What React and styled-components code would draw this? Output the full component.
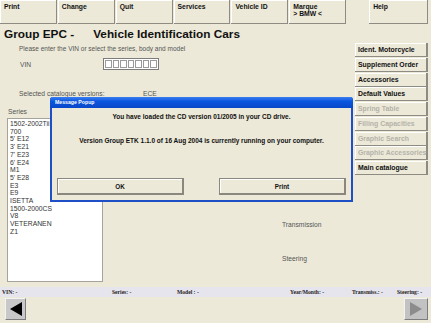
import React from "react";
import styled, { createGlobalStyle } from "styled-components";

const GlobalStyle = createGlobalStyle`
	html, body {
		margin: 0;
		padding: 0;
		background: #ece9d8;
	}
	* {
		box-sizing: border-box;
	}
`;

const Screen = styled.div`
	position: relative;
	width: 431px;
	height: 323px;
	overflow: hidden;
	background: #ece9d8;
	font-family: "Liberation Sans", Arial, sans-serif;
	color: #000;
	display: flex;
	flex-direction: column;
`;

const Toolbar = styled.div`
	display: flex;
	height: 24px;
	gap: 1px;
	padding-right: 3px;
`;

const ToolButton = styled.div`
	width: ${(props) => props.w || 57}px;
	margin-left: ${(props) => props.offset || 0}px;
	height: 24px;
	padding: 3px 4px;
	font-size: 6.8px;
	line-height: 7px;
	font-weight: bold;
	color: #111;
	background: #ece9d8;
	border-right: 1px solid #8e8c82;
	border-bottom: 1px solid #8e8c82;
	box-shadow: inset 1px 1px 0 #fff;
`;

const Main = styled.div`
	display: flex;
	height: 263px;
`;

const LeftPane = styled.div`
	flex: 1;
	display: flex;
	flex-direction: column;
`;

const Title = styled.div`
	display: flex;
	margin-top: 3px;
	padding-left: 4px;
	height: 15px;
	font-size: 11.8px;
	line-height: 15px;
	font-weight: bold;
	color: #111;
`;

const TitleGap = styled.span`
	margin-left: 19px;
`;

const Hint = styled.div`
	margin-top: 3px;
	padding-left: 19px;
	font-size: 6.5px;
	line-height: 8px;
	color: #555;
`;

const FieldRow = styled.div`
	display: flex;
	align-items: center;
	margin-top: ${(props) => props.top || 0}px;
	padding-left: ${(props) => props.indent || 20}px;
	font-size: 6.7px;
	color: #555;
`;

const FieldLabel = styled.span`
	width: ${(props) => props.w}px;
`;

const VinBoxes = styled.div`
	display: flex;
	height: 12px;
	border: 1px solid #7c7c7c;
	background: #fff;
	padding: 1px;
	gap: 1px;
`;

const VinCell = styled.div`
	width: 6.5px;
	height: 8px;
	border: 1px solid #9a9a9a;
	background: #fff;
`;

const SeriesLabel = styled.div`
	margin-top: 11px;
	padding-left: 8px;
	font-size: 6.7px;
	line-height: 8px;
	color: #555;
`;

const SeriesArea = styled.div`
	display: flex;
	margin-top: 2px;
	flex: 1;
	padding-bottom: 5px;
`;

const SeriesList = styled.div`
	margin-left: 7px;
	width: 96px;
	background: #fff;
	border: 1px solid #a5a39a;
	padding: 1px 2px;
	font-size: 6.8px;
	line-height: 7.7px;
	color: #333;
`;

const FormLabels = styled.div`
	display: flex;
	flex-direction: column;
	padding-left: 179px;
	padding-top: 103px;
	gap: 26px;
	font-size: 6.7px;
	line-height: 8px;
	color: #555;
`;

const SideColumn = styled.div`
	width: 73px;
	margin-right: 3px;
	padding-top: 19px;
	display: flex;
	flex-direction: column;
	gap: 0.75px;
`;

const SideButton = styled.div`
	height: 14px;
	padding-left: 3px;
	font-size: 6.9px;
	line-height: 13px;
	font-weight: bold;
	color: ${(props) => (props.disabled ? "#b4b2a8" : "#111")};
	background: #ece9d8;
	border-right: 2px solid #8e8c82;
	border-bottom: 1px solid #8e8c82;
	box-shadow: inset 1px 1px 0 #fff;
	white-space: nowrap;
	overflow: hidden;
`;

const StatusBar = styled.div`
	display: flex;
	align-items: center;
	height: 10px;
	padding-left: 2px;
	background: #e6e4ec;
	font-family: "Liberation Serif", "Times New Roman", serif;
	font-size: 5.6px;
	font-weight: bold;
	color: #222;
`;

const StatusItem = styled.span`
	width: ${(props) => props.w}px;
	flex: none;
`;

const NavBar = styled.div`
	display: flex;
	justify-content: space-between;
	align-items: flex-start;
	padding: 1px 3px 0 5px;
	flex: 1;
`;

const NavButton = styled.div`
	width: ${(props) => props.w}px;
	height: 22px;
	display: flex;
	align-items: center;
	justify-content: center;
	background: ${(props) => (props.disabled ? "#c2c2c2" : "#c8c8c8")};
	border-top: 1px solid #f2f2f2;
	border-left: 1px solid #f2f2f2;
	border-right: 1px solid #7d7d7d;
	border-bottom: 1px solid #7d7d7d;
`;

const Dialog = styled.div`
	position: absolute;
	left: 50px;
	top: 97px;
	width: 303px;
	height: 105px;
	background: #ece9d8;
	border: 2px solid #1f4fc6;
	border-top: none;
	border-radius: 3px 3px 0 0;
	display: flex;
	flex-direction: column;
`;

const DialogTitle = styled.div`
	height: 11px;
	margin: 0 -2px;
	padding-left: 5px;
	background: linear-gradient(to bottom, #3a7ef0, #0a55de 40%, #0847c8);
	border-radius: 3px 3px 0 0;
	font-size: 5.2px;
	line-height: 11px;
	font-weight: bold;
	color: #fff;
`;

const DialogText = styled.div`
	margin-top: ${(props) => props.top}px;
	text-align: center;
	font-size: 6.5px;
	line-height: 8px;
	font-weight: bold;
	color: #111;
`;

const DialogButtons = styled.div`
	display: flex;
	justify-content: space-between;
	margin-top: auto;
	padding: 0 5px 5px;
`;

const DialogButton = styled.div`
	width: 127px;
	height: 17px;
	display: flex;
	align-items: center;
	justify-content: center;
	font-size: 6.3px;
	font-weight: bold;
	color: #111;
	background: #ece9d8;
	border: 1px solid #8a887e;
	border-right-width: 2px;
	border-bottom-width: 2px;
	box-shadow: inset 1px 1px 0 #fff;
`;

const toolbar = [
	{ label: "Print" },
	{ label: "Change" },
	{ label: "Quit" },
	{ label: "Services" },
	{ label: "Vehicle ID" },
	{ label: ["Marque", "> BMW <"] },
	{ label: "Help", offset: 22, w: 59 },
];

const sideButtons = [
	{ label: "Ident. Motorcycle" },
	{ label: "Supplement Order" },
	{ label: "Accessories" },
	{ label: "Default Values" },
	{ label: "Spring Table", disabled: true },
	{ label: "Filling Capacities", disabled: true },
	{ label: "Graphic Search", disabled: true },
	{ label: "Graphic Accessories", disabled: true },
	{ label: "Main catalogue" },
];

const series = [
	"1502-2002Tii",
	"700",
	"5' E12",
	"3' E21",
	"7' E23",
	"6' E24",
	"M1",
	"5' E28",
	"E3",
	"E9",
	"ISETTA",
	"1500-2000CS",
	"V8",
	"VETERANEN",
	"Z1",
];

const status = [
	{ label: "VIN: -", w: 110 },
	{ label: "Series: -", w: 65 },
	{ label: "Model : -", w: 113 },
	{ label: "Year/Month: -", w: 62 },
	{ label: "Transmiss.: -", w: 45 },
	{ label: "Steering: -", w: 30 },
];

export default () => {
	return (
		<Screen>
			<GlobalStyle />
			<Toolbar>
				{toolbar.map((b, i) => (
					<ToolButton key={i} w={b.w} offset={b.offset}>
						{Array.isArray(b.label)
							? b.label.map((l) => <div key={l}>{l}</div>)
							: b.label}
					</ToolButton>
				))}
			</Toolbar>
			<Main>
				<LeftPane>
					<Title>
						<span>Group EPC -</span>
						<TitleGap>Vehicle Identification Cars</TitleGap>
					</Title>
					<Hint>Please enter the VIN or select the series, body and model</Hint>
					<FieldRow top={5}>
						<FieldLabel w={83}>VIN</FieldLabel>
						<VinBoxes>
							{[0, 1, 2, 3, 4, 5, 6].map((n) => (
								<VinCell key={n} />
							))}
						</VinBoxes>
					</FieldRow>
					<FieldRow top={20} indent={19}>
						<FieldLabel w={124}>Selected catalogue versions:</FieldLabel>
						<span>ECE</span>
					</FieldRow>
					<SeriesLabel>Series</SeriesLabel>
					<SeriesArea>
						<SeriesList>
							{series.map((s) => (
								<div key={s}>{s}</div>
							))}
						</SeriesList>
						<FormLabels>
							<span>Transmission</span>
							<span>Steering</span>
						</FormLabels>
					</SeriesArea>
				</LeftPane>
				<SideColumn>
					{sideButtons.map((b) => (
						<SideButton key={b.label} disabled={b.disabled}>
							{b.label}
						</SideButton>
					))}
				</SideColumn>
			</Main>
			<StatusBar>
				{status.map((s) => (
					<StatusItem key={s.label} w={s.w}>
						{s.label}
					</StatusItem>
				))}
			</StatusBar>
			<NavBar>
				<NavButton w={21}>
					<svg width="12" height="14" viewBox="0 0 12 14">
						<polygon points="0,7 12,0 12,14" fill="#000" />
					</svg>
				</NavButton>
				<NavButton w={24} disabled>
					<svg width="12" height="14" viewBox="0 0 12 14">
						<polygon points="12,7 0,0 0,14" fill="#8c8c8c" />
					</svg>
				</NavButton>
			</NavBar>
			<Dialog>
				<DialogTitle>Message Popup</DialogTitle>
				<DialogText top={5}>You have loaded the CD version 01/2005 in your CD drive.</DialogText>
				<DialogText top={16}>
					Version Group ETK 1.1.0 of 16 Aug 2004 is currently running on your computer.
				</DialogText>
				<DialogButtons>
					<DialogButton>OK</DialogButton>
					<DialogButton>Print</DialogButton>
				</DialogButtons>
			</Dialog>
		</Screen>
	);
};
